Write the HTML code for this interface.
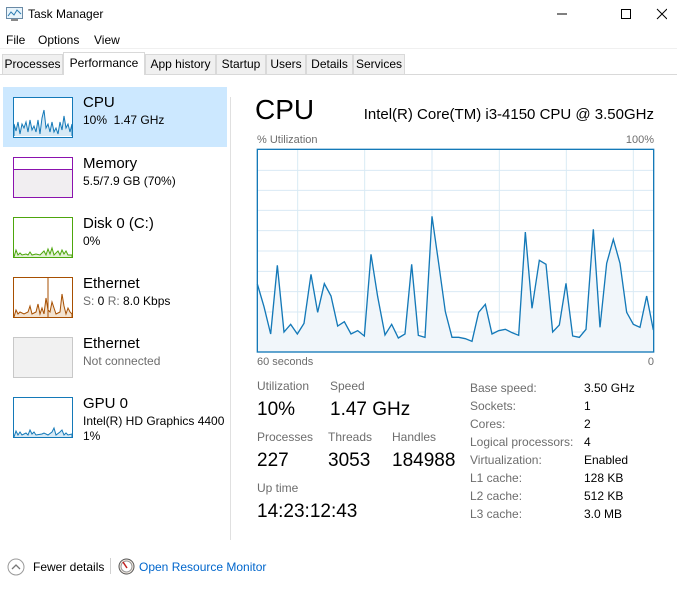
<!DOCTYPE html>
<html><head><meta charset="utf-8"><style>
*{margin:0;padding:0;box-sizing:border-box}
body{width:677px;height:591px;background:#fff;font-family:"Liberation Sans",sans-serif;color:#000;position:relative;overflow:hidden;font-size:12px}
.a{position:absolute;white-space:nowrap}
.tab{position:absolute;top:54px;height:20px;border:1px solid #d9d9d9;border-bottom:none;background:#f0f0f0;font-size:12px;text-align:center;line-height:19px}
.th{position:absolute;left:13px;width:60px;height:41px;border:1px solid}
.t1{position:absolute;left:83px;font-size:15px}
.t2{position:absolute;left:83px;font-size:12px}
.lbl{color:#6d6d6d;font-size:12px}
.val{font-size:19px}
</style></head><body>
<svg class="a" style="left:6px;top:7px" width="17" height="15" viewBox="0 0 17 15"><rect x="0.5" y="0.5" width="16" height="11" fill="#e8f4fb" stroke="#6a8aa6"/><polyline points="2,9 5,5 8,8 11,3 15,7" fill="none" stroke="#2a7ab0"/><rect x="5" y="12" width="7" height="2" fill="#888"/></svg>
<div class="a" style="left:28px;top:7px;font-size:12px">Task Manager</div>
<svg class="a" style="left:557px;top:8px" width="110" height="12"><line x1="0" y1="6" x2="10" y2="6" stroke="#000"/><rect x="64.5" y="1.5" width="9" height="9" fill="none" stroke="#000"/><path d="M110 1L100 11M100 1L110 11" stroke="#000"/></svg>
<div class="a" style="left:6px;top:33px">File</div>
<div class="a" style="left:38px;top:33px">Options</div>
<div class="a" style="left:94px;top:33px">View</div>
<div class="a" style="left:0;top:48px;width:677px;height:1px;background:#f0f0f0"></div>
<div class="a" style="left:0;top:74px;width:677px;height:1px;background:#d9d9d9"></div>
<div class="tab" style="left:2px;width:61px">Processes</div>
<div class="tab" style="left:63px;width:82px;top:52px;height:23px;background:#fff;line-height:20px">Performance</div>
<div class="tab" style="left:145px;width:71px">App history</div>
<div class="tab" style="left:216px;width:50px">Startup</div>
<div class="tab" style="left:266px;width:40px">Users</div>
<div class="tab" style="left:306px;width:47px">Details</div>
<div class="tab" style="left:353px;width:52px">Services</div>

<div class="a" style="left:3px;top:87px;width:224px;height:60px;background:#cce8ff"></div>
<div class="a" style="left:230px;top:97px;width:1px;height:443px;background:#e0e0e0"></div>

<div class="th" style="top:97px;border-color:#1479b8;background:#fff"><svg width="58" height="39" viewBox="0 0 58 39"><polyline points="0,38 0,26 2,33 4,24 6,36 8,26 10,30 12,24 14,34 16,22 18,32 20,28 22,34 24,22 26,36 28,20 30,12 32,30 34,26 36,34 38,24 40,34 42,30 44,36 46,24 48,32 50,18 52,30 54,26 56,34 58,26 58,38" fill="#d7e9f5" stroke="#1479b8" stroke-width="1"/></svg></div>
<div class="t1" style="top:94px">CPU</div><div class="t2" style="top:113px">10%&nbsp; 1.47 GHz</div>

<div class="th" style="top:157px;border-color:#8b12ae;background:#fff"><div style="position:absolute;left:0;top:11px;width:58px;height:28px;background:#f1eef1;border-top:1px solid #8b12ae"></div></div>
<div class="t1" style="top:155px">Memory</div><div class="t2" style="top:174px">5.5/7.9 GB (70%)</div>

<div class="th" style="top:217px;border-color:#4da60c;background:#fff"><svg width="58" height="39" viewBox="0 0 58 39"><polyline points="0,39 2,32 4,37 6,35 8,37 12,36 14,37 16,34 18,37 22,36 26,37 30,33 32,37 34,31 36,36 38,30 40,37 44,33 46,37 48,32 50,36 52,33 54,37 58,37 58,39" fill="#e3f1d6" stroke="#4da60c"/></svg></div>
<div class="t1" style="top:215px">Disk 0 (C:)</div><div class="t2" style="top:234px">0%</div>

<div class="th" style="top:277px;border-color:#a74f01;background:#fff"><svg width="58" height="39" viewBox="0 0 58 39"><polyline points="0,39 2,32 4,36 6,34 10,36 14,34 16,28 18,36 22,34 24,26 26,36 28,30 30,36 32,20 34,32 36,34 38,24 40,30 42,36 46,34 48,16 50,28 52,36 54,30 56,34 58,36 58,39" fill="#f3e3d0" stroke="#a74f01"/><line x1="34" y1="0" x2="34" y2="39" stroke="#a74f01"/></svg></div>
<div class="t1" style="top:275px">Ethernet</div><div class="t2" style="top:294px"><span style="color:#6d6d6d">S:</span> 0 <span style="color:#6d6d6d">R:</span> 8.0 Kbps</div>

<div class="th" style="top:337px;border-color:#c8c8c8;background:#f1f1f1"></div>
<div class="t1" style="top:335px">Ethernet</div><div class="t2" style="top:354px;color:#6d6d6d">Not connected</div>

<div class="th" style="top:397px;border-color:#1479b8;background:#fff"><svg width="58" height="39" viewBox="0 0 58 39"><polyline points="0,39 2,33 4,37 6,34 8,37 12,35 14,37 16,32 18,36 20,34 22,37 28,36 30,35 34,37 38,34 40,30 42,37 46,34 48,32 50,37 52,35 54,37 58,36 58,39" fill="#d7e9f5" stroke="#1479b8"/></svg></div>
<div class="t1" style="top:395px">GPU 0</div><div class="t2" style="top:414px">Intel(R) HD Graphics 4400</div><div class="t2" style="top:429px">1%</div>

<div class="a" style="left:255px;top:94px;font-size:28px">CPU</div>
<div class="a" style="right:23px;top:106px;font-size:15px">Intel(R) Core(TM) i3-4150 CPU @ 3.50GHz</div>
<div class="a lbl" style="left:257px;top:134px;font-size:11px">% Utilization</div>
<div class="a lbl" style="right:23px;top:134px;font-size:11px">100%</div>
<div class="a lbl" style="left:257px;top:356px;font-size:11px">60 seconds</div>
<div class="a lbl" style="right:23px;top:356px;font-size:11px">0</div>

<svg class="a" style="left:250px;top:140px" width="420" height="230" viewBox="0 0 1260 690">
<rect x="22" y="28" width="1189" height="608" fill="#fff"/>
<g stroke="#d9eaf4" stroke-width="3">
<line x1="143" y1="28" x2="143" y2="636"/><line x1="344" y1="28" x2="344" y2="636"/><line x1="546" y1="28" x2="546" y2="636"/><line x1="748" y1="28" x2="748" y2="636"/><line x1="949" y1="28" x2="949" y2="636"/><line x1="1150" y1="28" x2="1150" y2="636"/>
<line x1="22" y1="91" x2="1211" y2="91"/><line x1="22" y1="151" x2="1211" y2="151"/><line x1="22" y1="211" x2="1211" y2="211"/><line x1="22" y1="272" x2="1211" y2="272"/><line x1="22" y1="333" x2="1211" y2="333"/><line x1="22" y1="394" x2="1211" y2="394"/><line x1="22" y1="455" x2="1211" y2="455"/><line x1="22" y1="516" x2="1211" y2="516"/><line x1="22" y1="576" x2="1211" y2="576"/>
</g>
<polygon fill="#f1f6fa" points="22,636 22,432 42,500 62,582 82,376 102,576 122,553 142,582 162,550 183,403 203,517 223,431 243,468 263,558 283,545 303,582 323,572 343,588 363,343 383,470 405,585 425,553 445,594 465,582 485,373 505,586 525,592 546,229 566,370 586,515 606,592 626,592 646,596 666,604 686,517 706,493 726,582 746,572 766,568 786,578 806,586 826,276 846,505 868,361 888,373 908,576 928,555 948,430 968,588 988,592 1008,568 1030,268 1050,562 1070,370 1090,298 1110,370 1130,517 1150,553 1170,562 1190,468 1210,570 1210,636"/>
<polyline fill="none" stroke="#1479b8" stroke-width="4" points="22,432 42,500 62,582 82,376 102,576 122,553 142,582 162,550 183,403 203,517 223,431 243,468 263,558 283,545 303,582 323,572 343,588 363,343 383,470 405,585 425,553 445,594 465,582 485,373 505,586 525,592 546,229 566,370 586,515 606,592 626,592 646,596 666,604 686,517 706,493 726,582 746,572 766,568 786,578 806,586 826,276 846,505 868,361 888,373 908,576 928,555 948,430 968,588 988,592 1008,568 1030,268 1050,562 1070,370 1090,298 1110,370 1130,517 1150,553 1170,562 1190,468 1210,570"/>
<rect x="22" y="28" width="1189" height="608" fill="none" stroke="#1479b8" stroke-width="4"/>
</svg>

<div class="a lbl" style="left:257px;top:379px">Utilization</div>
<div class="a lbl" style="left:330px;top:379px">Speed</div>
<div class="a val" style="left:257px;top:399px">10%</div>
<div class="a val" style="left:330px;top:399px">1.47 GHz</div>
<div class="a lbl" style="left:257px;top:430px">Processes</div>
<div class="a lbl" style="left:328px;top:430px">Threads</div>
<div class="a lbl" style="left:392px;top:430px">Handles</div>
<div class="a val" style="left:257px;top:450px">227</div>
<div class="a val" style="left:328px;top:450px">3053</div>
<div class="a val" style="left:392px;top:450px">184988</div>
<div class="a lbl" style="left:257px;top:481px">Up time</div>
<div class="a val" style="left:257px;top:501px">14:23:12:43</div>

<div class="a lbl" style="left:470px;top:379px;line-height:18px">Base speed:<br>Sockets:<br>Cores:<br>Logical processors:<br>Virtualization:<br>L1 cache:<br>L2 cache:<br>L3 cache:</div>
<div class="a" style="left:584px;top:379px;line-height:18px">3.50 GHz<br>1<br>2<br>4<br>Enabled<br>128 KB<br>512 KB<br>3.0 MB</div>

<svg class="a" style="left:7px;top:558px" width="18" height="18"><circle cx="9" cy="9" r="8" fill="none" stroke="#9a9a9a"/><polyline points="5,11 9,7 13,11" fill="none" stroke="#777" stroke-width="1.3"/></svg>
<div class="a" style="left:33px;top:560px">Fewer details</div>
<div class="a" style="left:110px;top:558px;width:1px;height:16px;background:#d0d0d0"></div>
<svg class="a" style="left:118px;top:558px" width="17" height="17"><circle cx="8.5" cy="8.5" r="7.5" fill="#f4ece4" stroke="#555"/><circle cx="8.5" cy="8.5" r="5.5" fill="#fff" stroke="#999"/><line x1="5" y1="4" x2="9" y2="10" stroke="#c21f1f" stroke-width="1.5"/></svg>
<div class="a" style="left:139px;top:560px;color:#0066cc">Open Resource Monitor</div>
</body></html>
